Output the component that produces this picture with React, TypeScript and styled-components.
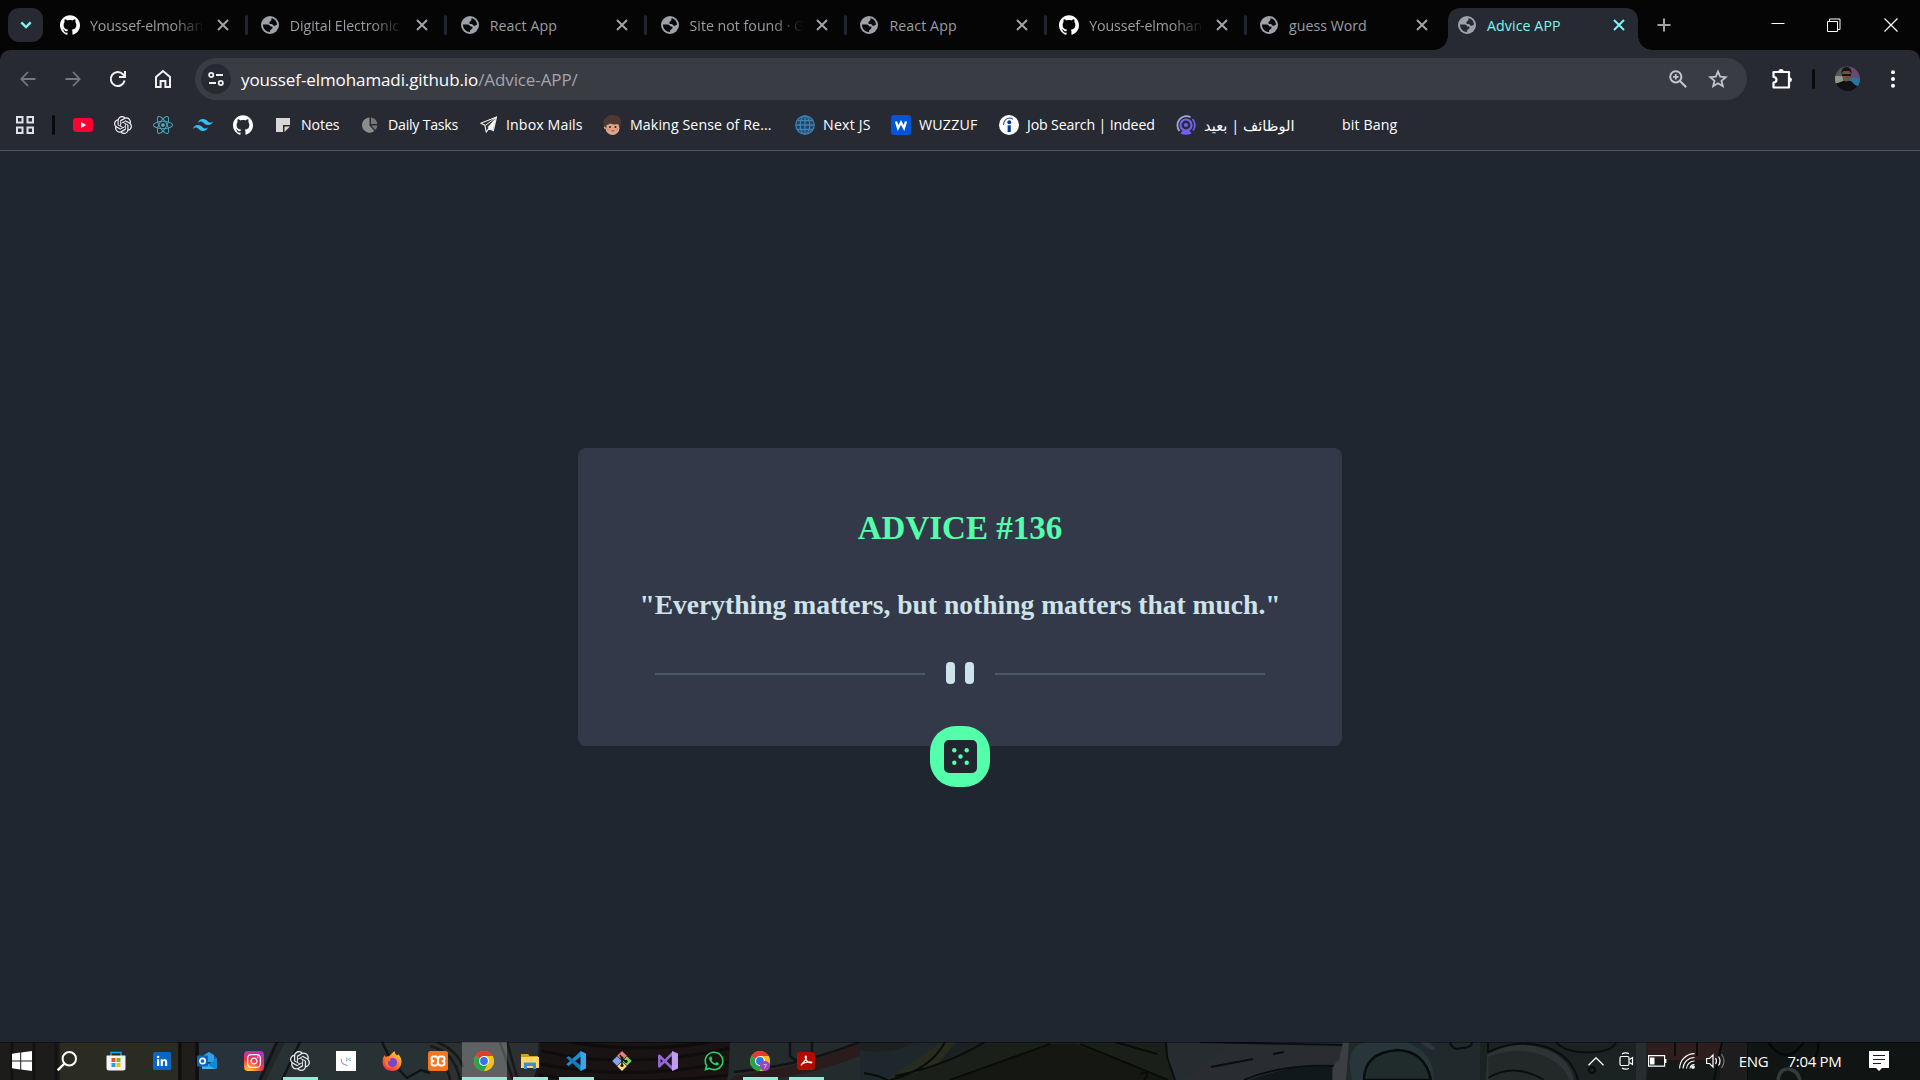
import React from 'react';
import styled, { createGlobalStyle } from 'styled-components';
import { SiGithub, SiOpenai, SiReact, SiTailwindcss } from 'react-icons/si';
import { FaInstagram, FaWhatsapp } from 'react-icons/fa';

const Global = createGlobalStyle`
  * { box-sizing: border-box; }
  html, body { margin: 0; padding: 0; background: #1f2630; overflow: hidden; }
  svg { display: block; flex: none; }
`;

const ui = `"Open Sans", "Noto Sans", "DejaVu Sans", sans-serif`;

const Screen = styled.div`
  width: 1920px;
  height: 1080px;
  display: flex;
  flex-direction: column;
  font-family: ${ui};
  color: #fff;
  overflow: hidden;
`;

/* ---------- tab strip ---------- */
const TabStrip = styled.div`
  height: 50px;
  flex: none;
  background: #050505;
  display: flex;
  padding-left: 8px;
`;
const TabSearch = styled.div`
  width: 35px;
  height: 34px;
  margin-top: 8px;
  margin-right: 3px;
  border-radius: 11px;
  background: #282a33;
  display: grid;
  place-items: center;
`;
const Tab = styled.div`
  width: 199.85px;
  height: 50px;
  flex: none;
  display: flex;
  align-items: center;
  padding-left: 14px;
`;
const Favicon = styled.span`
  width: 20px;
  height: 20px;
  margin-right: 10px;
  flex: none;
  display: grid;
  place-items: center;
`;
const TabTitle = styled.span<{ $fade?: boolean; $active?: boolean; $ls?: number }>`
  width: 114.5px;
  flex: none;
  white-space: nowrap;
  font-size: 14.2px;
  line-height: 22px;
  padding-top: 1px;
  letter-spacing: ${p => p.$ls || 0}px;
  color: ${p => (p.$active ? '#7ef3f3' : '#9a9da3')};
  ${p => p.$fade && 'mask-image: linear-gradient(90deg, #000 72%, transparent 100%);'}
`;
const CloseSlot = styled.span`
  width: 36px;
  flex: none;
  display: grid;
  place-items: center;
`;
const TabDivider = styled.span`
  width: 3px;
  height: 20px;
  margin-left: 4px;
  margin-right: -2px;
  border-radius: 2px;
  background: #23252e;
  flex: none;
`;
const ActiveTab = styled.div`
  position: relative;
  width: 190px;
  height: 42px;
  margin: 8px 0 0 3px;
  padding: 0 0 8px 9px;
  border-radius: 12px 12px 0 0;
  background: #282a33;
  display: flex;
  align-items: center;
  flex: none;
  &::before, &::after {
    content: '';
    position: absolute;
    bottom: 0;
    width: 14px;
    height: 14px;
  }
  &::before {
    left: -14px;
    background: radial-gradient(circle at 0 0, transparent 13.5px, #282a33 14px);
  }
  &::after {
    right: -14px;
    background: radial-gradient(circle at 100% 0, transparent 13.5px, #282a33 14px);
  }
`;
const NewTab = styled.div`
  width: 52px;
  height: 50px;
  display: grid;
  place-items: center;
`;
const WindowControls = styled.div`
  margin-left: auto;
  display: flex;
  align-items: center;
  height: 49px;
`;
const WindowButton = styled.span<{ $w: number }>`
  width: ${p => p.$w}px;
  display: grid;
  place-items: center;
`;

/* ---------- toolbar ---------- */
const Chrome = styled.div`
  height: 101px;
  flex: none;
  background: linear-gradient(#050505, #050505) 0 0 / 100% 12px no-repeat;
`;
const ChromeInner = styled.div`
  height: 101px;
  background: #282a33;
  border-radius: 10px 10px 0 0;
  border-bottom: 1px solid #53565c;
`;
const Toolbar = styled.div`
  height: 58px;
  display: flex;
  align-items: center;
  padding: 0 0 0 5px;
`;
const NavButton = styled.span`
  width: 45px;
  height: 45px;
  flex: none;
  display: grid;
  place-items: center;
`;
const Omnibox = styled.div`
  width: 1552px;
  height: 42px;
  margin-left: 10px;
  border-radius: 21px;
  background: #3a3c44;
  display: flex;
  align-items: center;
  padding-left: 6px;
  flex: none;
`;
const SiteInfo = styled.span`
  width: 30px;
  height: 30px;
  border-radius: 50%;
  background: #282a33;
  display: grid;
  place-items: center;
`;
const Url = styled.span`
  margin-left: 10px;
  flex: 1;
  font-size: 17px;
  line-height: 24px;
  padding-top: 1px;
  color: #fff;
  letter-spacing: -0.1px;
  span { color: #a3a5aa; }
`;
const OmniIcon = styled.span<{ $w: number }>`
  width: ${p => p.$w}px;
  flex: none;
  display: grid;
  place-items: center;
`;
const MenuDots = styled.span`
  flex: 1;
  padding-left: 4px;
  display: grid;
  place-items: center;
`;
const Bar = styled.span<{ $m: string }>`
  width: 3px;
  height: 20px;
  flex: none;
  border-radius: 2px;
  background: #0a0a0c;
  margin: ${p => p.$m};
`;

/* ---------- bookmarks ---------- */
const Bookmarks = styled.div`
  height: 34px;
  display: flex;
  align-items: center;
  padding-left: 15px;
`;
const Bookmark = styled.div<{ $w: number }>`
  width: ${p => p.$w}px;
  flex: none;
  display: flex;
  align-items: center;
`;
const BookmarkIcon = styled.span`
  width: 20px;
  height: 20px;
  display: grid;
  place-items: center;
  flex: none;
`;
const BookmarkLabel = styled.span<{ $ls?: number; $size?: number }>`
  margin-left: 8px;
  font-size: ${p => p.$size || 14.2}px;
  line-height: 20px;
  letter-spacing: ${p => p.$ls || 0}px;
  white-space: nowrap;
`;

/* ---------- page ---------- */
const Page = styled.main`
  flex: 1;
  background: #1f2630;
  display: flex;
  justify-content: center;
  padding-top: 297px;
`;
const Card = styled.section`
  position: relative;
  width: 764px;
  height: 298px;
  border-radius: 8px;
  background: #333949;
  padding-top: 60px;
  display: flex;
  flex-direction: column;
  align-items: center;
  font-family: "Liberation Serif", "Times New Roman", serif;
  font-weight: 700;
`;
const Heading = styled.h1`
  margin: 0;
  font-size: 33px;
  line-height: 40px;
  color: #53ffaa;
  white-space: nowrap;
`;
const Quote = styled.p`
  margin: 37px 0 37px;
  font-size: 27.55px;
  line-height: 40px;
  color: #cee3e9;
  white-space: nowrap;
`;
const Divider = styled.div`
  height: 22px;
  display: flex;
  align-items: center;
`;
const Rule = styled.span`
  width: 270px;
  height: 2px;
  margin-top: 2px;
  background: #4b586c;
`;
const Pause = styled.span`
  width: 70px;
  display: flex;
  justify-content: center;
  gap: 10px;
`;
const PauseBar = styled.i`
  width: 9px;
  height: 22px;
  border-radius: 4px;
  background: #cee3e9;
`;
const DiceButton = styled.button`
  position: absolute;
  left: 352px;
  bottom: -41px;
  width: 60px;
  height: 61px;
  padding: 0;
  border: 0;
  border-radius: 26px;
  background: #53ffaa;
  display: grid;
  place-items: center;
`;

/* ---------- taskbar ---------- */
const Taskbar = styled.footer`
  position: relative;
  height: 38px;
  flex: none;
  background: #1c2222;
  display: flex;
`;
const Wallpaper = styled.svg`
  position: absolute;
  inset: 0;
`;
const Apps = styled.div`
  position: relative;
  display: flex;
`;
const TaskButton = styled.span<{ $w?: number; $active?: boolean; $open?: boolean }>`
  width: ${p => p.$w || 46}px;
  height: 38px;
  display: grid;
  place-items: center;
  background:
    linear-gradient(#93ebd7, #93ebd7) center bottom / ${p => (p.$active ? 45 : p.$open ? 35 : 0)}px 3px no-repeat,
    linear-gradient(rgba(255, 255, 255, 0.24), rgba(255, 255, 255, 0.24)) center / ${p => (p.$active ? 45 : 0)}px 100% no-repeat;
`;
const Tray = styled.div`
  position: relative;
  margin-left: auto;
  display: flex;
  align-items: center;
`;
const TrayItem = styled.span<{ $w: number; $ls?: number }>`
  width: ${p => p.$w}px;
  display: grid;
  place-items: center;
  font-size: 15px;
  letter-spacing: ${p => p.$ls || 0}px;
  white-space: nowrap;
`;

const Close = ({ c = '#a0a3a8' }: { c?: string }) => (
  <svg width="12" height="12" viewBox="0 0 12 12" stroke={c} strokeWidth="2" fill="none">
    <path d="M1 1l10 10M11 1L1 11" />
  </svg>
);

const Globe = ({ hole = '#050505' }: { hole?: string }) => (
  <svg width="18" height="18" viewBox="0 0 18 18">
    <circle cx="9" cy="9" r="9" fill="#9da1a8" />
    <path d="M10.500 2.200C13.500 2.600 15.900 5.200 16 8.400L14 9.800C12.500 9.800 11.500 9.200 11.300 8H8.800C8 6.800 8.400 5.600 9.600 5 10.400 4.600 10.600 3.400 10.500 2.200z" fill={hole} />
    <path d="M2 8.500H6.500C8.300 8.500 9 9.600 9 10.600H11C12 11.400 11.600 12.600 10.600 13 9.500 13.400 9 14.600 9 16 5 16 2 12.800 2 8.500z" fill={hole} />
  </svg>
);

const tabs: { t: string; gh?: boolean; fade?: boolean; ls?: number }[] = [
  { t: 'Youssef-elmohan', gh: true, fade: true, ls: -0.1 },
  { t: 'Digital Electronic', fade: true, ls: -0.05 },
  { t: 'React App', ls: 0.1 },
  { t: 'Site not found · G', fade: true },
  { t: 'React App', ls: 0.1 },
  { t: 'Youssef-elmohan', gh: true, fade: true, ls: -0.1 },
  { t: 'guess Word' },
];

const ChromeLogo = () => (
  <svg width="20" height="20" viewBox="0 0 20 20">
    <circle cx="10" cy="10" r="10" fill="#fbc116" />
    <path d="M10 10L1.34 5A10 10 0 0 1 18.66 5H10z" fill="#e33b2e" />
    <path d="M10 10L1.34 5A10 10 0 0 0 10 20L14.3 12.5z" fill="#2ba24c" />
    <path d="M10 5h8.66A10 10 0 0 1 10 20l4.33-7.5z" fill="#fbc116" />
    <circle cx="10" cy="10" r="5" fill="#fff" />
    <circle cx="10" cy="10" r="3.9" fill="#3474e8" />
  </svg>
);

const WallpaperArt = () => (
  <Wallpaper width="1920" height="38" viewBox="0 0 1920 38">
    <rect width="1920" height="38" fill="#1b2020" />
    <rect width="60" height="38" fill="#1c1d1b" />
    <path d="M12 0v38M34 0v38M56 0v38" stroke="#111211" strokeWidth="3" />
    <rect x="60" width="118" height="38" fill="#2b2c21" />
    <rect x="178" width="20" height="38" fill="#201e1b" />
    <path d="M180 0v38M197 0v38" stroke="#0c0d0c" strokeWidth="3" />
    <path d="M199 0h76l-17 38h-59z" fill="#28323a" />
    <path d="M275 0h30l-22 38h-25z" fill="#222725" />
    <path d="M285 0h145v38H266z" fill="#283134" />
    <path d="M277 0l-17 38M300 0l-18 38M382 0l10 20 15 16 14-8 9 3" stroke="#0f1415" strokeWidth="2.500" fill="none" />
    <path d="M430 0h108v38H430z" fill="#2d3031" />
    <path d="M430 4q25 6 30 34M437 0q20 8 26 25M430 13q18 8 20 25M500 0l13 38M507 0l10 35" stroke="#151919" strokeWidth="2.500" fill="none" />
    <path d="M540 0h190q7 20-4 38H533q8-20 7-38z" fill="#191314" />
    <path d="M542 9q85 20 188-3M540 22q90 18 190-2M538 33q90 12 190 0M570 0q70 12 140 0" stroke="#0f0c0d" strokeWidth="3" fill="none" />
    <path d="M730 0h130v38H728z" fill="#242b2d" />
    <path d="M734 34Q800 26 860 2v12Q810 34 760 38h-30z" fill="#2a1b1d" />
    <path d="M734 30Q800 24 860 0M790 0v14q10 10 22 0V0" stroke="#101213" strokeWidth="2.500" fill="none" />
    <path d="M860 0h100l-65 38h-35z" fill="#1d272c" />
    <path d="M860 8q30 6 55-8h-55z" fill="#1c2021" />
    <path d="M942 0h14l-18 22-40 16h-12z" fill="#272c1f" />
    <path d="M955 0h210l6 38H890q50-12 100-38z" fill="#1b1f19" />
    <path d="M955 38L1050 2h25l90 36z" fill="#151712" />
    <path d="M945 0q-15 28-55 38M985 0q-40 24-90 34M950 38l100-36M1080 2l88 36M1115 0l42 12M864 31l14 3 14 6M1140 32q12-4 4 6" stroke="#090c0a" strokeWidth="2" fill="none" />
    <path d="M1167 0h180v38h-172q-8-18-8-38z" fill="#252d31" />
    <path d="M1230 2l112 3v18q-50 2-95 15h-65z" fill="#292d31" />
    <path d="M1250 38q40-16 82-13v13z" fill="#11181b" />
    <path d="M1166 0l1 15 8 23M1211 25l42-8M1273 12l11-2M1244 38q38-16 90-14M1200 0l146 3" stroke="#0a0e10" strokeWidth="2" fill="none" />
    <path d="M1333 38q-2-16 6-20l4-18h8l-5 38z" fill="#3c3f42" />
    <path d="M1349 0h131v38H1346z" fill="#202a2c" />
    <path d="M1352 38q-8-34 14-38h40q28 10 28 38z" fill="#28353a" />
    <path d="M1364 38q0-27 33-30 28 1 34 30z" fill="#202c2b" stroke="#080c0d" strokeWidth="2.500" />
    <path d="M1420 0q14 12 15 6L1428 0z" fill="#2b3741" />
    <path d="M1450 0q2 9 12 6 10 0 10-6" stroke="#090e0f" strokeWidth="2" fill="none" />
    <path d="M1480 0h170v38h-170z" fill="#1b2222" />
    <path d="M1488 0v12q30-16 60-4 22 10 26 30h-88z" fill="#2c3435" />
    <path d="M1488 15q30-12 56-1 20 8 25 24h-80z" fill="#232929" />
    <path d="M1488 0v10q30-14 58-5 26 9 32 33M1488 36q26-16 56 2M1556 0q10 12 40 10 18-2 20-10" stroke="#0a0e0e" strokeWidth="2" fill="none" />
    <circle cx="1592" cy="28" r="3" fill="none" stroke="#080c0c" strokeWidth="2" />
    <path d="M1636 0h10v38h-10z" fill="#262e30" />
    <path d="M1648 0h73l-4 18q-36 2-69-2z" fill="#2f1e1e" />
    <path d="M1650 18h70v20h-74z" fill="#151917" />
    <path d="M1675 0v14M1697 0v14M1722 0l-8 38M1747 0v38" stroke="#0a0c0c" strokeWidth="2" />
    <path d="M1748 0h172v38h-172z" fill="#101412" />
    <path d="M1724 0h23v38h-28z" fill="#1c1d1c" />
    <path d="M1768 0q18 26 36 0M1818 0q2 20-18 24" stroke="#070909" strokeWidth="2.500" fill="none" />
    <path d="M1778 38q2-14 14-10 6 2 8 10" stroke="#353b3b" strokeWidth="3.500" fill="none" />
    <rect width="1920" height="1" fill="#000" opacity="0.4" />
  </Wallpaper>
);

export default function App() {
  return (
    <Screen>
      <Global />
      <TabStrip>
        <TabSearch>
          <svg width="12" height="8" viewBox="0 0 12 8" fill="none" stroke="#7ef3f3" strokeWidth="2.4">
            <path d="M1.3 1.3L6 6l4.7-4.7" />
          </svg>
        </TabSearch>
        {tabs.map((x, i) => (
          <Tab key={i}>
            <Favicon>
              {x.gh ? <SiGithub size={20} color="#fff" /> : <Globe />}
            </Favicon>
            <TabTitle $fade={x.fade} $ls={x.ls}>{x.t}</TabTitle>
            <CloseSlot><Close /></CloseSlot>
            {i < 6 && <TabDivider />}
          </Tab>
        ))}
        <ActiveTab>
          <Favicon><Globe hole="#282a33" /></Favicon>
          <TabTitle $active $ls={0.1}>Advice APP</TabTitle>
          <CloseSlot><Close c="#7ef3f3" /></CloseSlot>
        </ActiveTab>
        <NewTab>
          <svg width="14" height="14" viewBox="0 0 14 14" stroke="#a0a3a8" strokeWidth="2"><path d="M7 0.5v13M0.5 7h13" /></svg>
        </NewTab>
        <WindowControls>
          <WindowButton $w={56}>
            <svg width="14" height="14" viewBox="0 0 14 14" stroke="#fff"><path d="M0.5 5.5h13" /></svg>
          </WindowButton>
          <WindowButton $w={56}>
            <svg width="14" height="14" viewBox="0 0 14 14" fill="none" stroke="#fff"><path d="M0.5 3.5h10v10h-10zM2.500 3.500v-2.500h10.500v10.500h-2.500" /></svg>
          </WindowButton>
          <WindowButton $w={58}>
            <svg width="14" height="14" viewBox="0 0 14 14" stroke="#fff" strokeWidth="1.2"><path d="M0.5 0.5l13 13M13.500 0.500l-13 13" /></svg>
          </WindowButton>
        </WindowControls>
      </TabStrip>

      <Chrome>
        <ChromeInner>
          <Toolbar>
            <NavButton>
              <svg width="16" height="16" viewBox="0 0 16 16" fill="none" stroke="#76787f" strokeWidth="1.8"><path d="M15.500 8H1.500M8 1L1.300 8 8 15" /></svg>
            </NavButton>
            <NavButton>
              <svg width="16" height="16" viewBox="0 0 16 16" fill="none" stroke="#76787f" strokeWidth="1.8"><path d="M.5 8h14M8 1l6.700 7L8 15" /></svg>
            </NavButton>
            <NavButton>
              <svg width="18" height="18" viewBox="0 0 18 18" fill="none" stroke="#f1f1f3" strokeWidth="2"><path d="M15.600 10.500A7 7 0 1 1 14 4.300L15.800 6M16 1v6h-6" /></svg>
            </NavButton>
            <NavButton>
              <svg width="18" height="20" viewBox="0 0 18 20" fill="none" stroke="#f1f1f3" strokeWidth="2"><path d="M2 8l7-6 7 6v10h-4.600v-6H6.600v6H2z" /></svg>
            </NavButton>
            <Omnibox>
              <SiteInfo>
                <svg width="16" height="16" viewBox="0 0 16 16" fill="none" stroke="#f1f1f3" strokeWidth="1.8">
                  <circle cx="3.200" cy="4" r="2.100" /><path d="M8 4h7M1 12h7" /><circle cx="12.800" cy="12" r="2.100" />
                </svg>
              </SiteInfo>
              <Url>youssef-elmohamadi.github.io<span>/Advice-APP/</span></Url>
              <OmniIcon $w={40}>
                <svg width="18" height="18" viewBox="0 0 18 18" fill="none" stroke="#c5c6ca" strokeWidth="2">
                  <circle cx="6.800" cy="6.800" r="5.600" /><path d="M11 11l6.200 6.200" /><path d="M6.800 4v5.600M4 6.800h5.600" strokeWidth="1.800" />
                </svg>
              </OmniIcon>
              <OmniIcon $w={40}>
                <svg width="20" height="20" viewBox="0 0 20 20" fill="none" stroke="#c5c6ca" strokeWidth="1.800">
                  <path d="M10 2.600l2.200 5.100 5.500.5-4.200 3.600 1.300 5.400L10 14.300l-4.800 2.900 1.300-5.400-4.200-3.600 5.500-.5z" />
                </svg>
              </OmniIcon>
              <OmniIcon $w={9.5} />
            </Omnibox>
            <OmniIcon $w={69}>
              <svg width="22" height="22" viewBox="0 0 22 22" fill="none" stroke="#fff" strokeWidth="2.200">
                <path d="M2.500 4h15.500v15.500H2.500v-5q3-.3 3-2.800t-3-2.700z" strokeLinejoin="round" />
                <path d="M7.500 3.500a2.600 2.600 0 0 1 5.200 0M18.500 9.200a2.500 2.500 0 0 1 0 5" fill="#fff" stroke="none" />
              </svg>
            </OmniIcon>
            <Bar $m="0 18px 0 -4px" />
            <svg width="28" height="26" viewBox="0 0 28 26">
              <defs><clipPath id="av"><circle cx="14.500" cy="13" r="12.500" /></clipPath></defs>
              <g clipPath="url(#av)">
                <rect width="28" height="26" fill="#6d4a75" />
                <rect width="11" height="26" fill="#55575a" />
                <path d="M2 10h8v7H2z" fill="#92958a" />
                <path d="M17 12h10v8H17z" fill="#2277a0" />
                <path d="M2 26v-8l8-3h8l4 4 5 2v5z" fill="#101015" />
                <ellipse cx="13.500" cy="9" rx="4.400" ry="6.500" fill="#70503f" />
                <path d="M8.500 8Q8 1 13.500 1t5 7l-2-3h-6zM9 8h9v2H9z" fill="#151518" />
              </g>
            </svg>
            <MenuDots>
              <svg width="6" height="20" viewBox="0 0 6 20" fill="#fff"><circle cx="3" cy="3.200" r="2" /><circle cx="3" cy="10" r="2" /><circle cx="3" cy="16.800" r="2" /></svg>
            </MenuDots>
          </Toolbar>

          <Bookmarks>
            <Bookmark $w={37}>
              <BookmarkIcon>
                <svg width="18" height="18" viewBox="0 0 18 18" fill="none" stroke="#e0e1e5" strokeWidth="2"><path d="M1 1h5.500v5.500H1zM11.500 1H17v5.500h-5.500zM1 11.500h5.500V17H1zM11.500 11.500H17V17h-5.500z" /></svg>
              </BookmarkIcon>
            </Bookmark>
            <Bar $m="0 18px 0 0" />
            <Bookmark $w={40}>
              <BookmarkIcon>
                <svg width="20" height="14" viewBox="0 0 20 14"><rect width="20" height="14" rx="3.200" fill="#ff0033" /><path d="M8 4l5.200 3L8 10z" fill="#fff" /></svg>
              </BookmarkIcon>
            </Bookmark>
            <Bookmark $w={40}><BookmarkIcon><SiOpenai size={18} color="#f3f3f5" /></BookmarkIcon></Bookmark>
            <Bookmark $w={40}><BookmarkIcon><SiReact size={20} color="#4fb0c6" /></BookmarkIcon></Bookmark>
            <Bookmark $w={40}><BookmarkIcon><SiTailwindcss size={20} color="#38bdf8" /></BookmarkIcon></Bookmark>
            <Bookmark $w={40}><BookmarkIcon><SiGithub size={20} color="#fff" /></BookmarkIcon></Bookmark>
            <Bookmark $w={87}>
              <BookmarkIcon>
                <svg width="14" height="14" viewBox="0 0 14 14"><path d="M0 0h14v7H7v7H0z" fill="#d9d8d6" /><path d="M8.500 8.500H14L8.500 14z" fill="#d9d8d6" /></svg>
              </BookmarkIcon>
              <BookmarkLabel $ls={-0.1}>Notes</BookmarkLabel>
            </Bookmark>
            <Bookmark $w={118}>
              <BookmarkIcon>
                <svg width="16" height="16" viewBox="0 0 16 16" fill="#8d8d90"><path d="M7.500.5v8l4.800 5.600A7.600 7.600 0 1 1 7.500.5z" /><path d="M9 .6A7.300 7.300 0 0 1 15.300 7H9zM9.200 8.400h6.200q-.3 2.600-2.200 4.600z" fill="#77777a" /></svg>
              </BookmarkIcon>
              <BookmarkLabel $ls={-0.25}>Daily Tasks</BookmarkLabel>
            </Bookmark>
            <Bookmark $w={124}>
              <BookmarkIcon>
                <svg width="20" height="18" viewBox="-1 0 20 20"><path d="M18.500 1L1 8l4.500 2.200L7 18l3-4.300 5 2.600z" fill="#333" stroke="#f2f2f2" strokeWidth="1.200" strokeLinejoin="round" /><path d="M18 2L8.500 12.500l6 3z" fill="#fff" /><path d="M18 1.500L6 10.500" stroke="#fff" /></svg>
              </BookmarkIcon>
              <BookmarkLabel $ls={0.1}>Inbox Mails</BookmarkLabel>
            </Bookmark>
            <Bookmark $w={193}>
              <BookmarkIcon>
                <svg width="20" height="20" viewBox="0 0 20 20">
                  <ellipse cx="10.500" cy="13" rx="7" ry="7" fill="#dda58c" />
                  <circle cx="3.700" cy="12.500" r="1.800" fill="#d79a80" />
                  <path d="M2 11Q0 5 4 3q1-3 7-3 7 0 8 6 .3 4-1.400 6.500L16.500 9q-5 1-8.500-.5Q7 9.500 4.500 10v3z" fill="#4c3932" />
                  <circle cx="8" cy="12" r="1" fill="#30201c" /><circle cx="13.500" cy="12" r="1" fill="#30201c" />
                  <circle cx="6.300" cy="14.500" r="1.300" fill="#ea8a80" /><circle cx="15" cy="14.500" r="1.300" fill="#ea8a80" />
                  <path d="M9.500 15.500q1.500 1.500 2.800 0" stroke="#a33" fill="none" />
                </svg>
              </BookmarkIcon>
              <BookmarkLabel $ls={0.1}>Making Sense of Re...</BookmarkLabel>
            </Bookmark>
            <Bookmark $w={96}>
              <BookmarkIcon>
                <svg width="20" height="20" viewBox="0 0 20 20" fill="none" stroke="#3c80b4" strokeWidth="1.300">
                  <circle cx="10" cy="10" r="9.200" fill="#24435d" /><ellipse cx="10" cy="10" rx="4.800" ry="9.200" /><path d="M10 1v18M1 10h18M2.500 5.500h15M2.500 14.500h15" />
                </svg>
              </BookmarkIcon>
              <BookmarkLabel $ls={0.2}>Next JS</BookmarkLabel>
            </Bookmark>
            <Bookmark $w={108}>
              <BookmarkIcon>
                <svg width="20" height="20" viewBox="0 0 20 20"><rect width="20" height="20" rx="3" fill="#0055d9" /><path d="M5 6.500l2 6.500L10 7.500l3 5.500 2-6.500" fill="none" stroke="#fff" strokeWidth="2.300" /></svg>
              </BookmarkIcon>
              <BookmarkLabel $ls={0.2}>WUZZUF</BookmarkLabel>
            </Bookmark>
            <Bookmark $w={177}>
              <BookmarkIcon>
                <svg width="20" height="20" viewBox="0 0 20 20"><circle cx="10" cy="10" r="10" fill="#fff" /><circle cx="10.300" cy="7.300" r="2" fill="#003a9b" /><path d="M8.600 10.300h3.200V17H8.600z" fill="#003a9b" /><path d="M4.500 10Q5 3.500 10.500 3q2 0 3.300 1.200" fill="none" stroke="#2557a7" strokeWidth="1.200" /></svg>
              </BookmarkIcon>
              <BookmarkLabel $ls={-0.16}>Job Search | Indeed</BookmarkLabel>
            </Bookmark>
            <Bookmark $w={138}>
              <BookmarkIcon>
                <svg width="20" height="20" viewBox="0 0 20 20" fill="none">
                  <path d="M3.500 16A9 9 0 0 1 14.500 2.200" stroke="#a3a6cf" strokeWidth="1.800" />
                  <path d="M16.500 4A9 9 0 0 1 17 15.500" stroke="#7060ee" strokeWidth="1.800" />
                  <circle cx="10" cy="10" r="5.500" stroke="#7060ee" strokeWidth="2.200" />
                  <circle cx="10" cy="10" r="2.100" fill="#7060ee" />
                  <path d="M4.500 18.500Q7 13.500 10 15q3-1.500 5.500 3.500-5.500 2.500-11 0z" fill="#7060ee" />
                </svg>
              </BookmarkIcon>
              <BookmarkLabel dir="rtl" $size={14.7}>الوظائف | بعيد</BookmarkLabel>
            </Bookmark>
            <Bookmark $w={90}>
              <BookmarkIcon />
              <BookmarkLabel $ls={0.1}>bit Bang</BookmarkLabel>
            </Bookmark>
          </Bookmarks>
        </ChromeInner>
      </Chrome>

      <Page>
        <Card>
          <Heading>ADVICE #136</Heading>
          <Quote>"Everything matters, but nothing matters that much."</Quote>
          <Divider>
            <Rule />
            <Pause><PauseBar /><PauseBar /></Pause>
            <Rule />
          </Divider>
          <DiceButton aria-label="New advice">
            <svg width="33" height="33" viewBox="0 0 33 33">
              <rect width="33" height="33" rx="5" fill="#1f2630" />
              <g fill="#53ffaa"><circle cx="10.300" cy="10.300" r="2.200" /><circle cx="22.700" cy="10.300" r="2.200" /><circle cx="16.500" cy="16.500" r="2.200" /><circle cx="10.300" cy="22.700" r="2.200" /><circle cx="22.700" cy="22.700" r="2.200" /></g>
            </svg>
          </DiceButton>
        </Card>
      </Page>

      <Taskbar>
        <WallpaperArt />
        <Apps>
          <TaskButton $w={44}>
            <svg width="20" height="20" viewBox="0 0 20 20" fill="#fff"><path d="M0 2.800l8.200-1.200v8H0zM9.200 1.400L20 0v9.600H9.200zM0 10.500h8.200v8L0 17.300zM9.200 10.500H20V20L9.200 18.600z" /></svg>
          </TaskButton>
          <TaskButton>
            <svg width="20" height="20" viewBox="0 0 20 20" fill="none" stroke="#fff" strokeWidth="2"><circle cx="12.300" cy="7.700" r="6.700" /><path d="M7.500 12.500L.7 19.300" strokeWidth="2.400" /></svg>
          </TaskButton>
          <TaskButton $w={51}>
            <svg width="20" height="20" viewBox="0 0 20 20"><path d="M5 5V1.500h10V5" fill="none" stroke="#22a7e0" strokeWidth="1.400" /><path d="M.5 4.500h19V17q0 2.500-2.500 2.500H3Q.5 19.500.5 17z" fill="#f4f4f4" /><path d="M5.500 7h4v4h-4z" fill="#e8502a" /><path d="M10.500 7h4v4h-4z" fill="#7cb518" /><path d="M5.500 12h4v4h-4z" fill="#1ea5e6" /><path d="M10.500 12h4v4h-4z" fill="#fbb80f" /></svg>
          </TaskButton>
          <TaskButton $w={42}>
            <svg width="18" height="18" viewBox="0 0 18 18"><rect width="18" height="18" rx="1.500" fill="#0a66c2" /><path d="M4 7.200h2.200V14H4zM7.700 7.200h2.100v1c1.300-2 4.400-1.500 4.400 1.800v4H12v-3.600c0-2.200-2.100-2-2.100 0V14H7.700z" fill="#fff" /><circle cx="5.100" cy="5" r="1.300" fill="#fff" /></svg>
          </TaskButton>
          <TaskButton $w={48}>
            <svg width="20" height="20" viewBox="0 0 20 20"><path d="M5 6l7-5 7 5v5H5z" fill="#1565b5" /><path d="M7 4l5-3 5 3v7H7z" fill="#2f9fe8" /><path d="M5 8l7 5 8-6v9q0 2-2 2H5z" fill="#35b8f1" /><path d="M20 7l-9 7 7 4q2 0 2-2z" fill="#1585d4" /><rect y="4.500" width="11" height="11" rx="1" fill="#0a64b8" /><circle cx="5.500" cy="10" r="2.700" fill="none" stroke="#fff" strokeWidth="1.700" /></svg>
          </TaskButton>
          <TaskButton>
            <svg width="20" height="20" viewBox="0 0 20 20"><defs><radialGradient id="ig" cx="25%" cy="105%" r="115%"><stop offset="0" stopColor="#ffd34e" /><stop offset=".3" stopColor="#fb8a31" /><stop offset=".58" stopColor="#f0314f" /><stop offset="1" stopColor="#b032c8" /></radialGradient></defs><rect width="20" height="20" rx="4" fill="url(#ig)" /><FaInstagram x="2" y="2" size={16} color="#fff" /></svg>
          </TaskButton>
          <TaskButton $open><SiOpenai size={20} color="#e6e8e8" /></TaskButton>
          <TaskButton>
            <svg width="20" height="20" viewBox="0 0 20 20"><path d="M0 0h20v20H0z" fill="#fff" /><path d="M5.500 8q-1.500 5 6 6.500M10.800 6.500v4" stroke="#8b98d8" strokeWidth="1.100" fill="none" /><path d="M15 7l-2.500 1.500L15 10" stroke="#77b6d0" fill="none" /></svg>
          </TaskButton>
          <TaskButton>
            <svg width="20" height="20" viewBox="0 0 20 20">
              <defs><linearGradient id="ff" x1="1" y1="0" x2=".3" y2="1"><stop offset="0" stopColor="#ffe146" /><stop offset=".5" stopColor="#ff8a1f" /><stop offset="1" stopColor="#f22b50" /></linearGradient></defs>
              <path d="M12.300 0Q13 3 15 4.500q1-.5 1-1.500 4 4 3.500 8.500Q18.500 20 10 20 1 19.500.5 11q0-4.500 2-7 .3 1.500 1.500 2 1-1 3-.8Q9.500 3 12.300 0z" fill="url(#ff)" />
              <circle cx="10.500" cy="11.500" r="4.600" fill="#7a43d8" /><path d="M3 7q4 0 6 1.200-.5 2-3 2.300Q5 15 9.500 16 5 18 3 13z" fill="#ff7421" />
            </svg>
          </TaskButton>
          <TaskButton>
            <svg width="20" height="20" viewBox="0 0 20 20"><rect width="20" height="20" rx="2.500" fill="#f37623" /><path d="M5.500 5.500h2.500Q9.500 5.500 10 10t2 4.500h2.500q2 0 2-2.200T14.500 10q2 0 2-2.300t-2-2.200H12Q10.500 5.500 10 10t-2 4.500H5.500q-2 0-2-2.200T5.500 10q-2 0-2-2.300t2-2.200z" fill="none" stroke="#fff" strokeWidth="1.900" strokeLinejoin="round" /></svg>
          </TaskButton>
          <TaskButton $active><ChromeLogo /></TaskButton>
          <TaskButton $open>
            <svg width="18" height="17" viewBox="0 0 18 17"><path d="M0 1h7l1.500 2H17v4H0z" fill="#dd9d16" /><path d="M0 4h18v11H0z" fill="#ffd766" /><path d="M3 16V9.500h12V16h-3v-3H6v3z" fill="#3b8fd9" /></svg>
          </TaskButton>
          <TaskButton $open>
            <svg width="20" height="20" viewBox="0 0 20 20"><path d="M15 0v5.500L2.500 15 .3 13.300z" fill="#1c8cd6" /><path d="M15 20v-5.500L2.500 5 .3 6.700z" fill="#1479bd" /><path d="M14.500 0L20 2.500v15L14.500 20z" fill="#32a7f0" /></svg>
          </TaskButton>
          <TaskButton>
            <svg width="20" height="20" viewBox="0 0 20 20"><path d="M10 0l4.800 4.800L10 9.600 5.200 4.800z" fill="#ee7f78" /><path d="M5 5.200L9.800 10 5 14.800.2 10z" fill="#80a8f0" /><path d="M15 5.200l4.800 4.800-4.800 4.800-4.800-4.800z" fill="#85cf62" /><path d="M10 10.400l4.800 4.800L10 20l-4.800-4.800z" fill="#f8dc87" /><path d="M8 4l2 3v8M10 8l4 2.500" stroke="#181818" strokeWidth="1.500" fill="none" /><circle cx="10" cy="7" r="1.600" fill="#181818" /><circle cx="14" cy="10.300" r="1.600" fill="#181818" /><circle cx="10" cy="14.500" r="1.600" fill="#181818" /></svg>
          </TaskButton>
          <TaskButton>
            <svg width="20" height="20" viewBox="0 0 20 20"><path d="M1.300 4.700L15 18V2L1.300 15.300z" fill="none" stroke="#9567d4" strokeWidth="2.600" strokeLinejoin="round" /><path d="M14 0l6 2.500v15L14 20z" fill="#c29af2" /></svg>
          </TaskButton>
          <TaskButton><FaWhatsapp size={22} color="#25d366" /></TaskButton>
          <TaskButton $open>
            <svg width="20" height="20" viewBox="0 0 20 20"><ChromeLogo /><circle cx="15" cy="15" r="5" fill="#a346b5" /><path d="M13.500 13.500h3l-2 4" stroke="#d7a4df" fill="none" /></svg>
          </TaskButton>
          <TaskButton $open>
            <svg width="18" height="18" viewBox="0 0 18 18"><rect width="18" height="18" rx="3" fill="#b30b00" /><path d="M4 13.500c1-2.500 5-5 5.300-7.500.3-2.500-1.300-2.500-1-.3.500 3 3.500 5 5.700 5.200 1.600-.2.700-1.300-1.400-1.100C9.500 10 6 11 4.500 12.500z" fill="none" stroke="#fff" strokeWidth="1.200" /></svg>
          </TaskButton>
        </Apps>
        <Tray>
          <TrayItem $w={30}>
            <svg width="16" height="9" viewBox="0 0 16 9" fill="none" stroke="#fff" strokeWidth="1.300"><path d="M.5 8.300L8 .8l7.500 7.500" /></svg>
          </TrayItem>
          <TrayItem $w={31}>
            <svg width="15" height="18" viewBox="0 0 15 18" fill="none" stroke="#fff" strokeWidth="1.200"><rect x="1" y="4.500" width="9" height="9" rx="1.500" /><path d="M10.500 7.500l3-2v7l-3-2M3 2Q6 0 10 1.500M3 16q3 2 7 .5" /></svg>
          </TrayItem>
          <TrayItem $w={30}>
            <svg width="19" height="12" viewBox="0 0 19 12"><path d="M.6.600h16v10.500H.6zM17.800 4v4" fill="none" stroke="#fff" strokeWidth="1.200" /><path d="M2 2.500h4.500v7H2z" fill="#fff" /></svg>
          </TrayItem>
          <TrayItem $w={30}>
            <svg width="16" height="16" viewBox="0 0 16 16" fill="none" stroke="#fff" strokeWidth="1.100"><path d="M.6 15.500A15 15 0 0 1 15.500.6M4 15.500A11.500 11.500 0 0 1 15.500 4.500M7.500 15.500a8 8 0 0 1 8-7.500" /><path d="M11 15.500a4.500 4.500 0 0 1 4.500-4" /><circle cx="14" cy="14" r="1.300" fill="#fff" /></svg>
          </TrayItem>
          <TrayItem $w={28}>
            <svg width="20" height="18" viewBox="0 0 20 18" fill="none" stroke="#fff" strokeWidth="1.200"><path d="M.6 6.500h3L7 3v12l-3.400-3.500h-3zM9.500 6q2 3 0 6M12.500 4.500q3 4.500 0 9" /><path d="M15.500 2q5 7 0 14" stroke="#777" /></svg>
          </TrayItem>
          <TrayItem $w={47} $ls={-0.3}>ENG</TrayItem>
          <TrayItem $w={75} $ls={-0.3}>7:04 PM</TrayItem>
          <TrayItem $w={53}>
            <svg width="20" height="20" viewBox="0 0 20 20"><path d="M0 0h20v17h-7l-3 3-3-3H0z" fill="#fff" /><path d="M4 4.500h12M4 8.500h12M4 12.500h8" stroke="#1b1f1e" strokeWidth="1.200" /></svg>
          </TrayItem>
          <TrayItem $w={15} />
        </Tray>
      </Taskbar>
    </Screen>
  );
}
